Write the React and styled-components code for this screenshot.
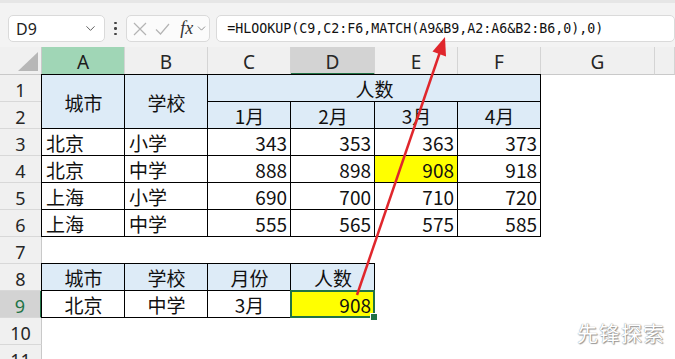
import React from "react";
import styled, { createGlobalStyle, css } from "styled-components";
import { ChevronDown } from "lucide-react";

const GlobalStyle = createGlobalStyle`
  body {
    margin: 0;
    background: #ffffff;
  }
`;

const Page = styled.div`
  position: relative;
  width: 675px;
  height: 359px;
  overflow: hidden;
  background: #ffffff;
  font-family: "Noto Sans", "Noto Sans CJK SC", sans-serif;
`;

// formula bar
const TopBar = styled.div`
  box-sizing: border-box;
  height: 47px;
  display: flex;
  align-items: flex-start;
  padding: 12px 0 0 8px;
  background: #f3f3f3;
  border-top: 3px solid #e6e6e6;
`;

const NameBox = styled.div`
  box-sizing: border-box;
  width: 101px;
  height: 27px;
  display: flex;
  align-items: center;
  justify-content: space-between;
  padding: 0 6px 0 7px;
  background: #ffffff;
  border: 1px solid #dadada;
  border-radius: 5px;
  font-size: 16px;
  color: #222;
`;

const Dots = styled.div`
  width: 22px;
  height: 27px;
  display: flex;
  flex-direction: column;
  align-items: center;
  justify-content: center;
  gap: 3px;
  span {
    width: 2.5px;
    height: 2.5px;
    border-radius: 50%;
    background: #444;
  }
`;

const FxBox = styled.div`
  box-sizing: border-box;
  width: 84px;
  height: 27px;
  display: flex;
  align-items: center;
  padding: 0 4px 0 6px;
  gap: 8px;
  background: #fbfbfb;
  border: 1px solid #dadada;
  border-radius: 5px;
  svg {
    flex: none;
  }
`;

const FxLabel = styled.span`
  font-family: "Liberation Serif", "DejaVu Serif", serif;
  font-style: italic;
  font-size: 18px;
  color: #333;
  margin-left: 2px;
  margin-right: -6px;
`;

const FormulaBox = styled.div`
  box-sizing: border-box;
  margin-left: 6px;
  width: 480px;
  height: 27px;
  display: flex;
  align-items: center;
  padding-left: 10px;
  background: #ffffff;
  border: 1px solid #dadada;
  border-radius: 5px;
  font-family: "DejaVu Sans Mono", "Liberation Mono", monospace;
  font-size: 13.3px;
  color: #111;
  white-space: nowrap;
`;

// sheet
const Sheet = styled.div`
  display: grid;
  grid-template-columns: 42px 83px 83px 83px 84px 83px 83px 114px 1fr;
  grid-template-rows: 28px repeat(11, 27px);
`;

const Corner = styled.div`
  grid-column: 1;
  grid-row: 1;
  position: relative;
  background: #f0f0f0;
  border-right: 1px solid #c9c9c9;
  border-bottom: 1px solid #c9c9c9;
  &::after {
    content: "";
    position: absolute;
    right: 3px;
    bottom: 3px;
    width: 20px;
    height: 19px;
    background: #b7b7b7;
    clip-path: polygon(100% 0, 100% 100%, 0 100%);
  }
`;

const ColHead = styled.div`
  box-sizing: border-box;
  grid-row: 1;
  grid-column: ${(p) => p.$col};
  display: flex;
  justify-content: center;
  align-items: center;
  padding-top: 3px;
  background: #f0f0f0;
  border-right: 1px solid #d4d4d4;
  border-bottom: 1px solid #c9c9c9;
  font-size: 19px;
  color: #262626;
  ${(p) =>
    p.$state === "green" &&
    css`
      background: #a0d6b6;
      color: #1c1c1c;
    `}
  ${(p) =>
    p.$state === "gray" &&
    css`
      background: #d3d3d3;
      border-bottom: 2px solid #217346;
    `}
`;

const RowHead = styled.div`
  box-sizing: border-box;
  grid-column: 1;
  grid-row: ${(p) => p.$row};
  display: flex;
  justify-content: center;
  align-items: center;
  padding-top: 4px;
  background: #f0f0f0;
  border-right: 1px solid #c9c9c9;
  border-bottom: 1px solid #d8d8d8;
  font-size: 18px;
  color: #262626;
  ${(p) =>
    p.$active &&
    css`
      background: #d3d3d3;
      color: #217346;
      border-right: 2px solid #217346;
    `}
`;

const Cell = styled.div`
  box-sizing: border-box;
  position: relative;
  grid-column: ${(p) => p.$col} / span ${(p) => p.$cs || 1};
  grid-row: ${(p) => p.$row} / span ${(p) => p.$rs || 1};
  margin: -1px 0 0 -1px;
  display: flex;
  align-items: center;
  justify-content: ${(p) =>
    p.$align === "right" ? "flex-end" : p.$align === "left" ? "flex-start" : "center"};
  padding: 1px 3px 0 4px;
  background: ${(p) => p.$bg || "#ffffff"};
  border: 1px solid #000;
  font-family: "Noto Sans CJK SC", "Noto Sans", sans-serif;
  font-size: 19px;
  line-height: 1;
  color: #111;
  ${(p) =>
    p.$selected &&
    css`
      &::after {
        content: "";
        position: absolute;
        inset: -1px -1px -1px -1px;
        border: 2px solid #217346;
      }
      &::before {
        content: "";
        position: absolute;
        right: -4px;
        bottom: -4px;
        width: 6px;
        height: 6px;
        background: #217346;
        border: 1px solid #fff;
        z-index: 2;
      }
    `}
`;

const Arrow = styled.svg`
  position: absolute;
  left: 0;
  top: 0;
  pointer-events: none;
`;

const Watermark = styled.div`
  position: absolute;
  right: 10px;
  bottom: 12px;
  font-family: "Noto Sans CJK SC", sans-serif;
  font-size: 21px;
  letter-spacing: 1px;
  color: #ffffff;
  text-shadow: 0 0 1px #777, 1px 1px 1px #999;
`;

const BLUE = "#ddebf7";
const YELLOW = "#ffff00";

const letters = ["A", "B", "C", "D", "E", "F", "G", ""];

const cells = [
  { r: 1, c: 1, rs: 2, t: "城市", bg: BLUE },
  { r: 1, c: 2, rs: 2, t: "学校", bg: BLUE },
  { r: 1, c: 3, cs: 4, t: "人数", bg: BLUE },
  { r: 2, c: 3, t: "1月", bg: BLUE },
  { r: 2, c: 4, t: "2月", bg: BLUE },
  { r: 2, c: 5, t: "3月", bg: BLUE },
  { r: 2, c: 6, t: "4月", bg: BLUE },
];

const rows = [
  ["北京", "小学", 343, 353, 363, 373],
  ["北京", "中学", 888, 898, 908, 918],
  ["上海", "小学", 690, 700, 710, 720],
  ["上海", "中学", 555, 565, 575, 585],
];

rows.forEach((row, i) => {
  row.forEach((v, j) => {
    cells.push({
      r: i + 3,
      c: j + 1,
      t: v,
      a: j < 2 ? "left" : "right",
      bg: i === 1 && j === 4 ? YELLOW : undefined,
    });
  });
});

["城市", "学校", "月份", "人数"].forEach((t, j) =>
  cells.push({ r: 8, c: j + 1, t, bg: BLUE })
);
["北京", "中学", "3月"].forEach((t, j) => cells.push({ r: 9, c: j + 1, t }));
cells.push({ r: 9, c: 4, t: 908, a: "right", bg: YELLOW, sel: true });

const XIcon = () => (
  <svg width="14" height="14" viewBox="0 0 14 14">
    <path d="M1 1 L13 13 M13 1 L1 13" stroke="#b4b4b4" strokeWidth="1.2" fill="none" />
  </svg>
);

const CheckIcon = () => (
  <svg width="15" height="14" viewBox="0 0 15 14">
    <path d="M1 7.5 L5.5 12 L14 2" stroke="#b4b4b4" strokeWidth="1.2" fill="none" />
  </svg>
);

export default function App() {
  return (
    <Page>
      <GlobalStyle />
      <TopBar>
        <NameBox>
          D9
          <ChevronDown size={15} color="#555" strokeWidth={1.5} />
        </NameBox>
        <Dots>
          <span />
          <span />
          <span />
        </Dots>
        <FxBox>
          <XIcon />
          <CheckIcon />
          <FxLabel>fx</FxLabel>
          <ChevronDown size={13} color="#777" strokeWidth={1.5} />
        </FxBox>
        <FormulaBox>=HLOOKUP(C9,C2:F6,MATCH(A9&amp;B9,A2:A6&amp;B2:B6,0),0)</FormulaBox>
      </TopBar>
      <Sheet>
        <Corner />
        {letters.map((l, i) => (
          <ColHead
            key={i}
            $col={i + 2}
            $state={i === 0 ? "green" : i === 3 ? "gray" : undefined}
          >
            {l}
          </ColHead>
        ))}
        {Array.from({ length: 11 }, (_, i) => (
          <RowHead key={i} $row={i + 2} $active={i === 8}>
            {i + 1}
          </RowHead>
        ))}
        {cells.map((c, i) => (
          <Cell
            key={i}
            $row={c.r + 1}
            $col={c.c + 1}
            $rs={c.rs}
            $cs={c.cs}
            $align={c.a}
            $bg={c.bg}
            $selected={c.sel}
          >
            {c.t}
          </Cell>
        ))}
      </Sheet>
      <Arrow width="675" height="359" viewBox="0 0 675 359">
        <line x1="357" y1="295" x2="440" y2="52" stroke="#e0262c" strokeWidth="2.5" />
        <polygon points="445,37 446,56.5 432.5,51.5" fill="#e0262c" />
      </Arrow>
      <Watermark>先锋探索</Watermark>
    </Page>
  );
}
